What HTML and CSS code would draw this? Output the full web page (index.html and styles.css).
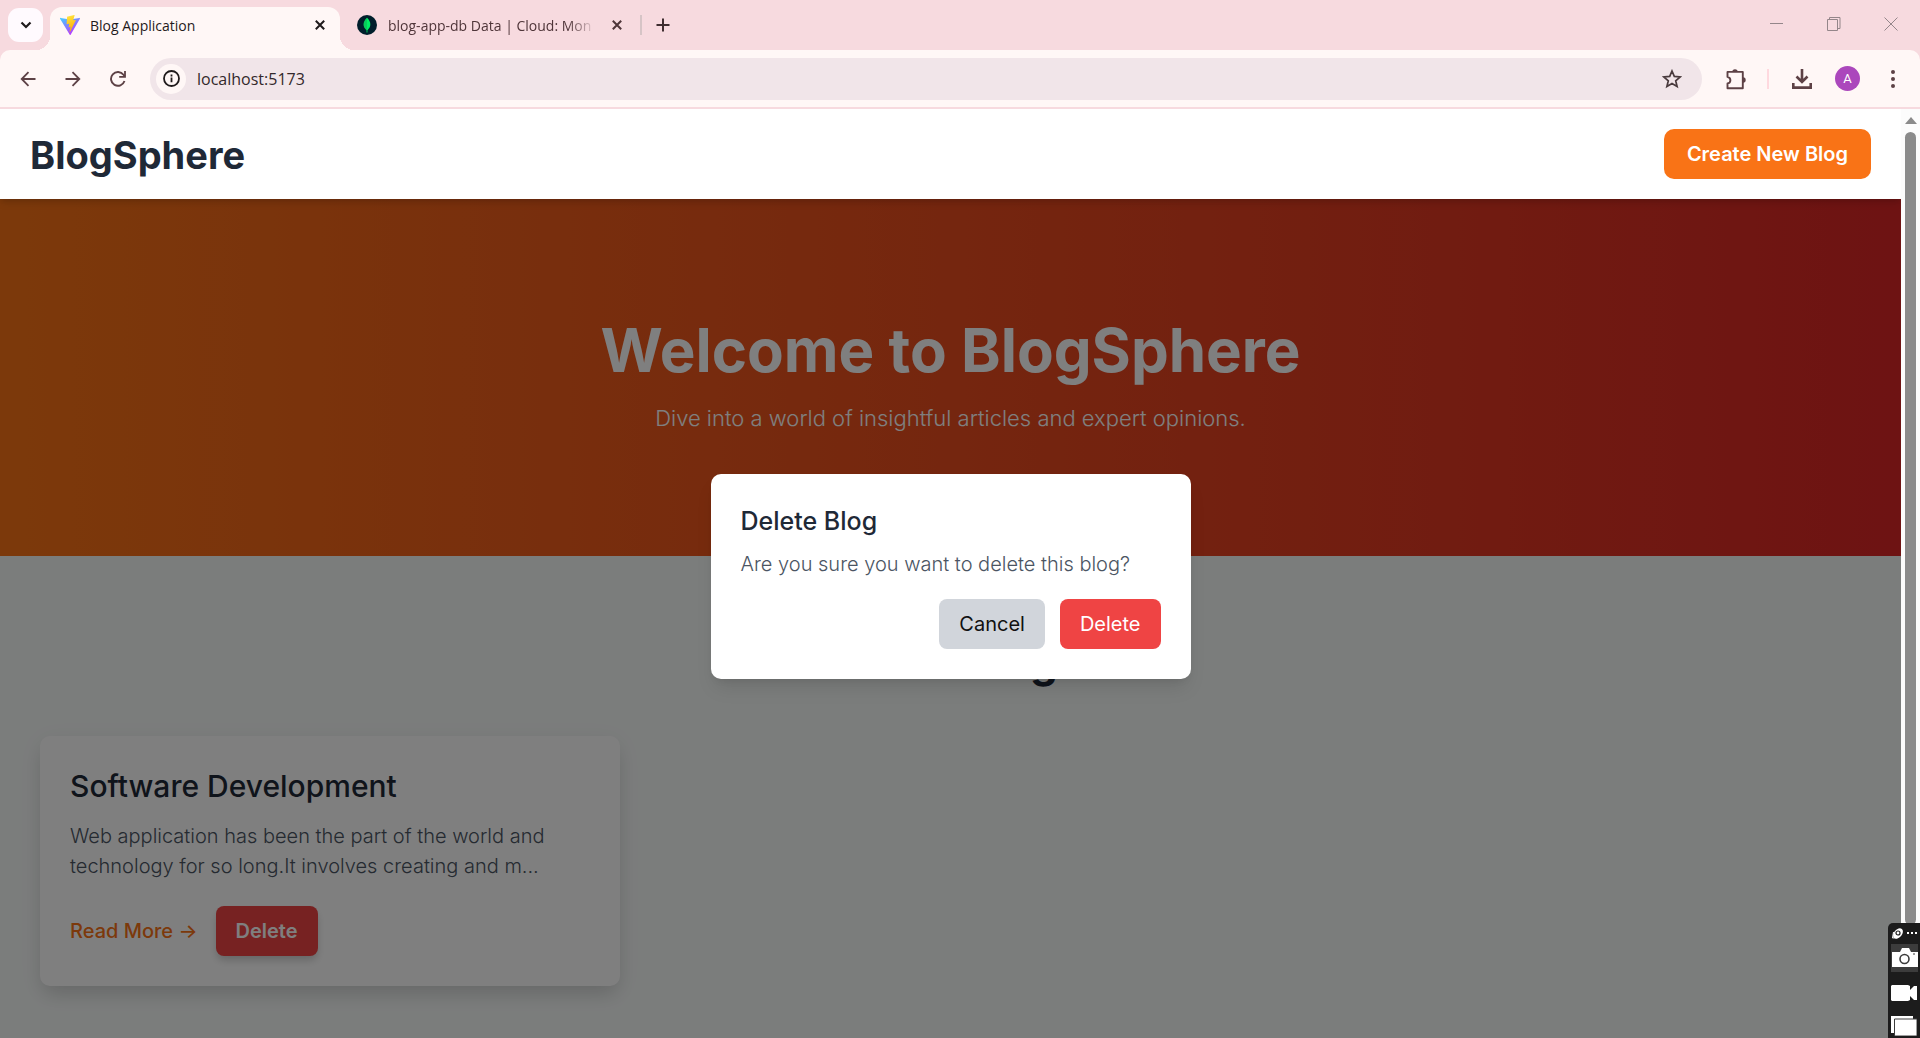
FILE: index.html
```html
<!DOCTYPE html>
<html lang="en">
<head>
<meta charset="utf-8">
<title>Blog Application</title>
<link rel="stylesheet" href="styles.css">
</head>
<body>
<div class="browser">
  <div class="tabstrip">
    <button class="tab-search" aria-label="Search tabs"><svg width="12" height="8" viewBox="0 0 12 8"><path d="M1.5 1.5 6 6l4.500-4.500" fill="none" stroke="#1f1a1b" stroke-width="2.200"/></svg></button>
    <div class="tab tab-active">
      <svg width="20" height="20" viewBox="0 0 32 32"><defs><linearGradient id="v1" x1="0" y1="0" x2=".6" y2="1"><stop offset="0" stop-color="#41d1ff"/><stop offset="1" stop-color="#bd34fe"/></linearGradient><linearGradient id="v2" x1=".4" y1="0" x2=".6" y2="1"><stop offset="0" stop-color="#ffea83"/><stop offset=".1" stop-color="#ffdd35"/><stop offset="1" stop-color="#ffa800"/></linearGradient></defs><path fill="url(#v1)" d="M31.900 5.800 17 31.500a.8.8 0 0 1-1.400 0L.1 5.800c-.4-.6.1-1.300.9-1.200l15 2.700 15-2.700c.7-.1 1.200.6.900 1.200z"/><path fill="url(#v2)" d="M22.800 0 11.600 2.200c-.2 0-.3.2-.3.400l-.7 11.700c0 .3.200.5.500.4l3.100-.7c.3-.1.6.2.5.5l-.9 4.600c-.1.300.2.600.5.500l2-.6c.3-.1.6.2.5.500l-1.500 7.100c-.1.400.5.700.8.300l.1-.3 9.100-18.200c.2-.3-.1-.6-.4-.6l-3.200.6c-.3.100-.6-.2-.5-.5l2.100-7.300c.1-.3-.2-.6-.5-.6z"/></svg>
      <span class="tab-title">Blog Application</span>
      <button class="tab-close" aria-label="Close tab"><svg width="10" height="10" viewBox="0 0 10 10"><path d="M.8.8l8.400 8.400M9.200.8.8 9.200" stroke="#1f1a1b" stroke-width="2"/></svg></button>
    </div>
    <div class="tab tab-idle">
      <svg width="20" height="20" viewBox="0 0 20 20"><circle cx="10" cy="10" r="10" fill="#001e2b"/><path d="M10 2.800c4.400 4 4.400 9.200.4 12.400V17.500h-.8v-2.300C5.600 12 5.600 6.800 10 2.800z" fill="#00ed64"/><path d="M10 2.800c-4.400 4-4.400 9.200-.4 12.400l.4.300z" fill="#12a150" opacity=".45"/></svg>
      <span class="tab-title tab-title-fade">blog-app-db Data | Cloud: Mon</span>
      <button class="tab-close" aria-label="Close tab"><svg width="10" height="10" viewBox="0 0 10 10"><path d="M.8.8l8.400 8.400M9.200.8.8 9.200" stroke="#4f3539" stroke-width="2"/></svg></button>
    </div>
    <span class="tab-divider"></span>
    <button class="new-tab" aria-label="New tab"><svg width="14" height="14" viewBox="0 0 14 14"><path d="M7 .5v13M.5 7h13" stroke="#3f2d30" stroke-width="2"/></svg></button>
    <div class="window-controls">
      <button aria-label="Minimize"><svg width="14" height="14" viewBox="0 0 14 14"><path d="M0 6.500h13" stroke="#94868a"/></svg></button>
      <button aria-label="Restore"><svg width="14" height="14" viewBox="0 0 14 14"><path d="M.5 2.500h10v11H.5zM2.500 2.500v-2h10.500v11h-2.500" fill="none" stroke="#94868a"/></svg></button>
      <button aria-label="Close"><svg width="14" height="14" viewBox="0 0 14 14"><path d="M.5.5l13 13M13.500.5l-13 13" stroke="#94868a"/></svg></button>
    </div>
  </div>
  <div class="toolbar">
    <button class="nav" aria-label="Back"><svg width="16" height="16" viewBox="0 0 16 16"><path d="M15.500 8H2M8.500 1.200 1.700 8l6.800 6.800" fill="none" stroke="#5d4145" stroke-width="1.800"/></svg></button>
    <button class="nav" aria-label="Forward"><svg width="16" height="16" viewBox="0 0 16 16"><path d="M.5 8H14M7.500 1.200 14.300 8l-6.800 6.800" fill="none" stroke="#5d4145" stroke-width="1.800"/></svg></button>
    <button class="nav" aria-label="Reload"><svg width="16" height="16" viewBox="0 0 16 16"><path d="M14.500 10A6.900 6.900 0 1 1 13.500 3.800L14.800 5.500" fill="none" stroke="#5d4145" stroke-width="1.900"/><path d="M15.900 0v6.700H9.200V4.900h4.900V0z" fill="#5d4145"/></svg></button>
    <div class="omnibox">
      <button class="site-info" aria-label="Site information"><svg width="17" height="17" viewBox="0 0 17 17"><circle cx="8.500" cy="8.500" r="7.500" fill="none" stroke="#1f1a1b" stroke-width="1.800"/><path d="M8.500 7.600v4.600M8.500 4.500v1.900" stroke="#1f1a1b" stroke-width="1.800"/></svg></button>
      <input class="address" type="text" value="localhost:5173" aria-label="Address">
      <button class="star" aria-label="Bookmark"><svg width="20" height="20" viewBox="0 0 20 20"><path d="M10 2l2.300 5.400 5.900.5-4.500 3.900 1.400 5.700L10 14.500l-5.100 3 1.400-5.700L1.800 7.900l5.900-.5z" fill="none" stroke="#4a3b3e" stroke-width="1.700"/></svg></button>
    </div>
    <button class="extension" aria-label="Extensions"><svg width="22" height="22" viewBox="0 0 22 22"><path d="M2.500 3.900h15.300v16.300H2.500v-4.700c3.500-.3 4.200-5.600 0-6.600z" fill="none" stroke="#5d4145" stroke-width="1.900" stroke-linejoin="round"/><path d="M7.300 4a2.700 2.700 0 0 1 5.400 0zM18 9.300a2.700 2.700 0 0 1 0 5.400z" fill="#5d4145"/></svg></button>
    <span class="toolbar-divider"></span>
    <button class="download" aria-label="Downloads"><svg width="20" height="20" viewBox="0 0 20 20"><path d="M10 0v13M4.500 7.500l5.500 5.500 5.500-5.500M1.300 14v4.600h17.400V14" fill="none" stroke="#5d4145" stroke-width="2.600"/></svg></button>
    <button class="avatar" aria-label="Profile">A</button>
    <button class="menu" aria-label="Menu"><svg width="4" height="18" viewBox="0 0 4 18"><g fill="#5d4145"><circle cx="2" cy="2" r="2"/><circle cx="2" cy="9" r="2"/><circle cx="2" cy="16" r="2"/></g></svg></button>
  </div>
  <div class="viewport">
    <div class="page">
      <header class="site-header">
        <a class="brand" href="#">BlogSphere</a>
        <button class="create">Create New Blog</button>
      </header>
      <main>
        <section class="hero">
          <h1>Welcome to BlogSphere</h1>
          <p>Dive into a world of insightful articles and expert opinions.</p>
        </section>
        <section class="posts">
          <h2>Latest Blogs</h2>
          <div class="grid">
            <article class="card">
              <h3>Software Development</h3>
              <p>Web application has been the part of the world and technology for so long.It involves creating and m...</p>
              <div class="card-actions">
                <a href="#">Read More →</a>
                <button class="btn card-delete">Delete</button>
              </div>
            </article>
          </div>
        </section>
      </main>
      <div class="overlay">
        <div class="dialog" role="dialog" aria-labelledby="dialog-title">
          <h2 id="dialog-title">Delete Blog</h2>
          <p>Are you sure you want to delete this blog?</p>
          <div class="dialog-actions">
            <button class="btn cancel">Cancel</button>
            <button class="btn confirm">Delete</button>
          </div>
        </div>
      </div>
    </div>
    <div class="scrollbar"><span class="scroll-up"></span><span class="scroll-thumb"></span></div>
  </div>
  <div class="capture">
    <div class="capture-top"><svg width="32" height="20" viewBox="0 0 32 20"><ellipse cx="10" cy="10.500" rx="6" ry="4" transform="rotate(-50 10 10.500)" fill="#fff"/><circle cx="10" cy="10" r="2" fill="none" stroke="#1c1c1c" stroke-width="1.200"/><path d="M5.500 9l-1 6 5.500-.5" stroke="#fff" fill="none"/><path d="M19 9h2v2h-2zM23 9h2v2h-2zM27 9h2v2h-2z" fill="#fff"/></svg></div>
    <button class="capture-camera" aria-label="Screenshot"><svg width="26" height="20" viewBox="0 0 26 20"><path d="M0 4h8l2-4h7l2 4h7v15H0z" fill="#fff"/><circle cx="12.500" cy="11" r="4.500" fill="none" stroke="#3c3c3c" stroke-width="1.600"/><path d="M21 6h2" stroke="#3c3c3c"/></svg></button>
    <button aria-label="Record video"><svg width="26" height="16" viewBox="0 0 26 16"><path d="M1 0h16l2 1v4l4-4h3v14h-3l-4-4v4l-2 1H1L0 15V1z" fill="#fff"/></svg></button>
    <button aria-label="Gallery"><svg width="26" height="20" viewBox="0 0 26 20"><path d="M0 0h22v17H0z" fill="#fff"/><path d="M3.500 3H26v17H3.500z" fill="#fff" stroke="#3c3c3c"/></svg></button>
  </div>
</div>
</body>
</html>
```
FILE: styles.css
```css
* { box-sizing: border-box; margin: 0; padding: 0; }
body { font-family: Inter, sans-serif; }
button { font: inherit; border: 0; background: none; color: inherit; display: flex; align-items: center; justify-content: center; cursor: pointer; }
a { text-decoration: none; }
svg { display: block; flex: none; }

.browser { position: relative; height: 100vh; display: flex; flex-direction: column; overflow: hidden; background: #f7dadf; }

/* Tab strip */
.tabstrip { height: 50px; flex: none; display: flex; padding: 7px 0 0 8px; font: 14px "Open Sans", sans-serif; color: #4f3539; }
.tab-search { position: relative; z-index: 1; width: 35px; height: 34px; margin-top: 1px; border-radius: 11px; background: #fffafe; }
.tab { display: flex; align-items: center; gap: 10px; width: 290px; height: 43px; padding: 0 15px 7px 10px; }
.tab-idle { padding: 0 8px 7px 17px; gap: 11px; }
.tab-active { position: relative; margin-left: 7px; border-radius: 12px 12px 0 0; background: #fff7f6; color: #1f1a1b; }
.tab-active::before, .tab-active::after { content: ""; position: absolute; bottom: 0; width: 14px; height: 14px; }
.tab-active::before { right: 100%; background: radial-gradient(circle at 0 0, #f7dadf 14px, #fff7f6 14px); }
.tab-active::after { left: 100%; background: radial-gradient(circle at 100% 0, #f7dadf 14px, #fff7f6 14px); }
.tab-title { flex: 1; overflow: hidden; white-space: nowrap; }
.tab-title-fade { margin-right: 5px; -webkit-mask-image: linear-gradient(90deg, #000 86%, transparent); mask-image: linear-gradient(90deg, #000 86%, transparent); }
.tab-divider { width: 2px; height: 20px; margin: 8px 13px 0 10px; background: #d6c4c6; }
.new-tab { width: 16px; height: 36px; }
.window-controls { display: flex; gap: 43px; margin-left: auto; padding: 10px 22px 0 0; height: 24px; }

/* Toolbar */
.toolbar { height: 59px; flex: none; display: flex; align-items: center; padding: 0 21px 0 20px; background: #fff7f6; border-bottom: 2px solid #f7dadf; border-radius: 10px 10px 0 0; }
.nav { width: 16px; height: 28px; margin-right: 29px; }
.omnibox { flex: 1; display: flex; align-items: center; height: 42px; margin-left: -5px; padding: 0 20px 0 6px; border-radius: 21px; background: #f1e5e9; }
.site-info { width: 30px; height: 30px; border-radius: 50%; background: #fff7f6; }
.address { flex: 1; margin-left: 11px; border: 0; outline: 0; background: none; font: 16px "Open Sans", sans-serif; color: #33282b; }
.extension { margin-left: 23px; }
.toolbar-divider { width: 2px; height: 20px; margin: 0 23px 0 20px; background: #ffd9df; }
.avatar { width: 25px; height: 25px; margin: 0 31px 0 23px; border-radius: 50%; background: #ab47bc; color: #fff; font: 13px Roboto, sans-serif; }
.menu { margin-right: 4px; }

/* Viewport */
.viewport { flex: 1; min-height: 0; display: flex; }
.page { position: relative; flex: 1; min-width: 0; overflow: hidden; background: #f7faf9; }
.scrollbar { width: 19px; display: flex; flex-direction: column; align-items: center; padding-top: 8px; background: #fcfcfc; }
.scroll-up { border: 6px solid transparent; border-top: 0; border-bottom: 7px solid #8b8b8b; }
.scroll-thumb { width: 11px; height: 793px; margin-top: 8px; border-radius: 6px; background: #8b8b8b; }

.site-header { position: relative; z-index: 2; display: flex; align-items: center; justify-content: space-between; height: 90px; padding: 0 30px; background: #fff; box-shadow: 0 5px 8px -1px rgba(0, 0, 0, .1), 0 3px 5px -2px rgba(0, 0, 0, .1); }
.brand { padding-top: 2px; font-size: 38px; font-weight: 700; line-height: 48px; color: #1f2937; }
.create { height: 50px; padding: 0 23px; border-radius: 10px; background: #f97316; color: #fff; font-size: 20px; font-weight: 600; }

.hero { padding: 114px 30px 120px; text-align: center; color: #fff; background: linear-gradient(90deg, #f97316, #dc2626); }
.hero h1 { font-size: 60px; line-height: 75px; font-weight: 700; }
.hero p { margin-top: 12px; font-size: 22px; line-height: 36px; font-weight: 300; color: #fff; }

.posts { padding: 80px 40px; }
.posts > h2 { font-size: 44px; line-height: 50px; font-weight: 700; text-align: center; color: #1f2937; }
.grid { display: grid; grid-template-columns: repeat(3, 1fr); gap: 40px; margin-top: 50px; }
.card { padding: 30px; border-radius: 10px; background: #fff; box-shadow: 0 12px 19px -4px rgba(0, 0, 0, .12), 0 5px 24px rgba(0, 0, 0, .06); }
.card h3 { font-size: 30px; line-height: 40px; font-weight: 500; color: #1f2937; }
.card p { margin-top: 15px; font-size: 20px; line-height: 30px; font-weight: 300; color: #4b5563; }
.card-actions { display: flex; align-items: center; gap: 18px; margin-top: 25px; }
.card-actions a { font-size: 20px; font-weight: 500; color: #f97316; }
.btn { height: 50px; padding: 0 20px; border-radius: 8px; font-size: 20px; }
.card-delete { background: #ef4444; color: #fff; font-weight: 600; box-shadow: 0 5px 8px -1px rgba(0, 0, 0, .2); }

.overlay { position: absolute; z-index: 1; inset: 0; display: flex; align-items: center; justify-content: center; padding-top: 6px; background: rgba(0, 0, 0, .5); }
.dialog { width: 480px; padding: 30px; border-radius: 10px; background: #fff; box-shadow: 0 12px 19px -4px rgba(0, 0, 0, .1), 0 5px 8px -5px rgba(0, 0, 0, .1); }
.dialog h2 { font-size: 25px; line-height: 35px; font-weight: 500; color: #1f2937; }
.dialog p { margin-top: 10px; font-size: 20px; line-height: 30px; font-weight: 300; color: #4b5563; }
.dialog-actions { display: flex; justify-content: flex-end; gap: 15px; margin-top: 20px; }
.cancel { background: #d1d5db; color: #111; }
.confirm { background: #ef4444; color: #fff; }

/* Floating capture tools */
.capture { position: absolute; z-index: 3; right: 0; bottom: 0; width: 32px; height: 115px; border-radius: 5px 0 0; background: #1c1c1c; }
.capture-top { height: 21px; }
.capture button { width: 32px; height: 33px; }
.capture .capture-camera { width: 27px; height: 28px; margin: 0 0 4px 3px; background: #3c3c3c; }
```
